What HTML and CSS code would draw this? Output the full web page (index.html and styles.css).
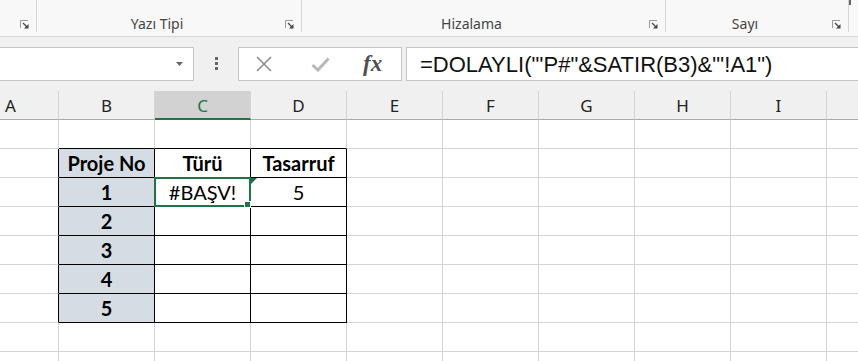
FILE: index.html
```html
<!DOCTYPE html>
<html lang="tr">
<head>
    <meta charset="UTF-8" />
    <title>Kitap1 - Excel</title>
    <link rel="stylesheet" href="styles.css">
</head>
<body>

    <div class="ribbon">
        <div class="group g-clip">
            <span class="group-label"></span>
            <svg class="launcher" viewBox="0 0 9 9"><path d="M0.5 8 V0.5 H8" fill="none" stroke="#999"/><path d="M3 3 L6.5 6.5" stroke="#444" stroke-width="1.2"/><path d="M8.5 8.5 H4 L8.5 4 Z" fill="#444"/></svg>
        </div>
        <div class="group g-font">
            <span class="group-label">Yazı Tipi</span>
            <svg class="launcher" viewBox="0 0 9 9"><path d="M0.5 8 V0.5 H8" fill="none" stroke="#999"/><path d="M3 3 L6.5 6.5" stroke="#444" stroke-width="1.2"/><path d="M8.5 8.5 H4 L8.5 4 Z" fill="#444"/></svg>
        </div>
        <div class="group g-align">
            <span class="group-label">Hizalama</span>
            <svg class="launcher" viewBox="0 0 9 9"><path d="M0.5 8 V0.5 H8" fill="none" stroke="#999"/><path d="M3 3 L6.5 6.5" stroke="#444" stroke-width="1.2"/><path d="M8.5 8.5 H4 L8.5 4 Z" fill="#444"/></svg>
        </div>
        <div class="group g-number">
            <span class="group-label">Sayı</span>
            <svg class="launcher" viewBox="0 0 9 9"><path d="M0.5 8 V0.5 H8" fill="none" stroke="#999"/><path d="M3 3 L6.5 6.5" stroke="#444" stroke-width="1.2"/><path d="M8.5 8.5 H4 L8.5 4 Z" fill="#444"/></svg>
        </div>
        <div class="group g-rest"><span class="tab-mark"></span></div>
    </div>

    <div class="formula-bar">
        <div class="name-box">
            <svg class="caret" viewBox="0 0 7 4"><path d="M0 0 H7 L3.5 4 Z" fill="#666"/></svg>
        </div>
        <svg class="dots" viewBox="0 0 3 13"><rect x="0" y="0" width="3" height="3" fill="#666"/><rect x="0" y="5" width="3" height="3" fill="#666"/><rect x="0" y="10" width="3" height="3" fill="#666"/></svg>
        <div class="fx-box">
            <svg class="ico-cancel" viewBox="0 0 16 16"><path d="M1 1 L15 15 M15 1 L1 15" stroke="#8c8c8c" stroke-width="1.6"/></svg>
            <svg class="ico-enter" viewBox="0 0 19 15"><path d="M1.5 8 L7 13 L17.5 1.5" fill="none" stroke="#b8b8b8" stroke-width="3"/></svg>
            <span class="fx">fx</span>
        </div>
        <div class="formula">=DOLAYLI("'P#"&amp;SATIR(B3)&amp;"'!A1")</div>
    </div>

    <div class="sheet">
        <div class="grid">
            <div class="ch">A</div><div class="ch">B</div><div class="ch active">C</div><div class="ch">D</div><div class="ch">E</div><div class="ch">F</div><div class="ch">G</div><div class="ch">H</div><div class="ch">I</div><div class="ch"></div>

            <div class="c"></div><div class="c tt"></div><div class="c tt"></div><div class="c tt"></div><div class="c"></div><div class="c"></div><div class="c"></div><div class="c"></div><div class="c"></div><div class="c"></div>

            <div class="c tl"></div><div class="c t key b">Proje No</div><div class="c t b">Türü</div><div class="c t b">Tasarruf</div><div class="c"></div><div class="c"></div><div class="c"></div><div class="c"></div><div class="c"></div><div class="c"></div>

            <div class="c tl"></div><div class="c t key b">1</div><div class="c t sel">#BAŞV!<span class="handle"></span></div><div class="c t err">5</div><div class="c"></div><div class="c"></div><div class="c"></div><div class="c"></div><div class="c"></div><div class="c"></div>

            <div class="c tl"></div><div class="c t key b">2</div><div class="c t"></div><div class="c t"></div><div class="c"></div><div class="c"></div><div class="c"></div><div class="c"></div><div class="c"></div><div class="c"></div>

            <div class="c tl"></div><div class="c t key b">3</div><div class="c t"></div><div class="c t"></div><div class="c"></div><div class="c"></div><div class="c"></div><div class="c"></div><div class="c"></div><div class="c"></div>

            <div class="c tl"></div><div class="c t key b">4</div><div class="c t"></div><div class="c t"></div><div class="c"></div><div class="c"></div><div class="c"></div><div class="c"></div><div class="c"></div><div class="c"></div>

            <div class="c tl"></div><div class="c t key b">5</div><div class="c t"></div><div class="c t"></div><div class="c"></div><div class="c"></div><div class="c"></div><div class="c"></div><div class="c"></div><div class="c"></div>

            <div class="c"></div><div class="c"></div><div class="c"></div><div class="c"></div><div class="c"></div><div class="c"></div><div class="c"></div><div class="c"></div><div class="c"></div><div class="c"></div>

            <div class="c"></div><div class="c"></div><div class="c"></div><div class="c"></div><div class="c"></div><div class="c"></div><div class="c"></div><div class="c"></div><div class="c"></div><div class="c"></div>
        </div>
    </div>

</body>
</html>
```

FILE: styles.css
```css
body { margin: 0; width: 858px; height: 361px; overflow: hidden; background: #fff; font-family: "Noto Sans", sans-serif; }

/* ribbon group labels */
.ribbon { display: flex; height: 37px; background: #f8f8f8; border-bottom: 1px solid #d5d5d5; box-sizing: border-box; }
.group { display: flex; align-items: flex-end; height: 32px; border-right: 1px solid #d4d4d4; box-sizing: border-box; }
.g-clip { width: 37px; }
.g-font { width: 265px; }
.g-align { width: 364px; }
.g-number { width: 183px; }
.g-rest { flex: 1; border-right: none; }
.group-label { flex: 1; text-align: center; font-size: 14px; line-height: 16px; color: #444; }
.launcher { width: 9px; height: 9px; margin: 0 7px 3px 8px; }
.tab-mark { display: block; width: 2px; height: 5px; margin: 0 0 27px 0; align-self: flex-start; background: #666; }

/* formula bar */
.formula-bar { display: flex; height: 54px; padding: 10px 0; box-sizing: border-box; background: #f0f0f0; }
.name-box { display: flex; align-items: center; justify-content: flex-end; width: 195px; margin-left: -1px; padding-right: 10px; box-sizing: border-box; background: #fff; border: 1px solid #c6c6c6; }
.caret { width: 7px; height: 4px; }
.dots { width: 3px; height: 13px; margin: 10px 0 0 21px; }
.fx-box { display: flex; align-items: center; width: 164px; margin-left: 20px; box-sizing: border-box; background: #fff; border: 1px solid #c6c6c6; }
.ico-cancel { width: 16px; height: 16px; margin-left: 17px; }
.ico-enter { width: 19px; height: 15px; margin-left: 39px; }
.fx { margin-left: 33px; font-family: "Liberation Serif", serif; font-style: italic; font-weight: bold; font-size: 23px; color: #505050; line-height: 1; padding-bottom: 2px; }
.formula { flex: 1; margin-left: 4px; padding: 1px 0 0 13px; background: #fff; border: 1px solid #c6c6c6; border-right: none; font-family: "Liberation Sans", Arial, sans-serif; font-size: 22px; line-height: 31px; color: #111; white-space: nowrap; overflow: hidden; }

/* sheet grid */
.sheet { height: 270px; overflow: hidden; background: #f0f0f0; }
.grid { display: grid; grid-template-columns: repeat(10, 96px); grid-auto-rows: 29px; margin-left: -37px; }
.ch { box-sizing: border-box; text-align: center; font-size: 17px; line-height: 29px; color: #222; background: #f0f0f0; border-right: 1px solid #d4d4d4; border-bottom: 1px solid #ababab; }
.ch.active { background: #d2d2d2; color: #217346; border-bottom: 2px solid #217346; }
.c { position: relative; box-sizing: border-box; background: #fff; text-align: center; font-family: Lato, "Liberation Sans", sans-serif; font-size: 20px; line-height: 28px; color: #000; border-right: 1px solid #d4d4d4; border-bottom: 1px solid #d4d4d4; }
.tt { border-bottom-color: #000; }
.tl { border-right-color: #000; }
.t { border-right-color: #000; border-bottom-color: #000; }
.key { background: #d6dce4; }
.b { font-weight: bold; }

.sel::after { content: ""; position: absolute; left: -1px; top: -1px; right: -1px; bottom: -1px; border: 2px solid #217346; }
.handle { position: absolute; right: -1px; bottom: -2px; width: 5px; height: 5px; background: #217346; border: 1px solid #fff; z-index: 2; }
.err::before { content: ""; position: absolute; top: 0; left: 0; border-top: 6px solid #1e7145; border-right: 6px solid transparent; }
```
